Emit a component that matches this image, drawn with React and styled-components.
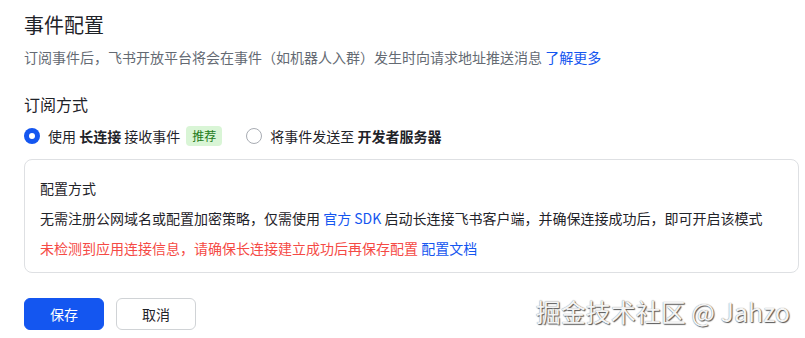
import React, { useState } from "react";
import styled, { createGlobalStyle } from "styled-components";

const GlobalStyle = createGlobalStyle`
  body {
    margin: 0;
    background: #fff;
    font-family: "Noto Sans CJK SC", "Noto Sans", sans-serif;
    color: #1f2329;
  }
`;

function App() {
  const [mode, setMode] = useState("ws");

  return (
    <Page>
      <GlobalStyle />
      <Title>事件配置</Title>
      <Desc>
        订阅事件后，飞书开放平台将会在事件（如机器人入群）发生时向请求地址推送消息{" "}
        <Link>了解更多</Link>
      </Desc>

      <SectionTitle>订阅方式</SectionTitle>
      <RadioGroup>
        <RadioItem onClick={() => setMode("ws")}>
          <Radio checked={mode === "ws"} />
          <span>
            使用 <b>长连接</b> 接收事件
          </span>
          <Tag>推荐</Tag>
        </RadioItem>
        <RadioItem onClick={() => setMode("http")}>
          <Radio checked={mode === "http"} />
          <span>
            将事件发送至 <b>开发者服务器</b>
          </span>
        </RadioItem>
      </RadioGroup>

      <Card>
        <Line>配置方式</Line>
        <Line>
          无需注册公网域名或配置加密策略，仅需使用 <Link>官方 SDK</Link>{" "}
          启动长连接飞书客户端，并确保连接成功后，即可开启该模式
        </Line>
        <Line $error>
          未检测到应用连接信息，请确保长连接建立成功后再保存配置{" "}
          <Link>配置文档</Link>
        </Line>
      </Card>

      <Actions>
        <Button $primary>保存</Button>
        <Button>取消</Button>
      </Actions>

      <Watermark>掘金技术社区 @ Jahzo</Watermark>
    </Page>
  );
}

const Page = styled.div`
  position: relative;
  width: 805px;
  height: 338px;
  box-sizing: border-box;
  padding: 11px 6px 0 24px;
  overflow: hidden;
`;

const Title = styled.div`
  font-size: 20px;
  line-height: 28px;
  color: #1f2329;
`;

const Desc = styled.div`
  margin-top: 7px;
  font-size: 14px;
  line-height: 22px;
  color: #646a73;
  white-space: nowrap;
`;

const Link = styled.a`
  color: #1456f0;
  cursor: pointer;
`;

const SectionTitle = styled.div`
  margin-top: 24px;
  font-size: 16px;
  line-height: 24px;
`;

const RadioGroup = styled.div`
  margin-top: 9px;
  display: flex;
  align-items: center;
  gap: 24px;
  font-size: 14px;
  line-height: 22px;

  b {
    font-weight: 600;
  }
`;

const RadioItem = styled.label`
  display: flex;
  align-items: center;
  gap: 8px;
  cursor: pointer;
`;

const Radio = styled.span`
  position: relative;
  width: 16px;
  height: 16px;
  box-sizing: border-box;
  border-radius: 50%;
  border: ${(p) => (p.checked ? "none" : "1px solid #a8acb3")};
  background: ${(p) => (p.checked ? "#1456f0" : "#fff")};

  &::after {
    content: "";
    display: ${(p) => (p.checked ? "block" : "none")};
    position: absolute;
    left: 5px;
    top: 5px;
    width: 6px;
    height: 6px;
    border-radius: 50%;
    background: #fff;
  }
`;

const Tag = styled.span`
  margin-left: -2px;
  padding: 0 6px;
  height: 20px;
  line-height: 20px;
  font-size: 12px;
  border-radius: 4px;
  background: #d9f5d6;
  color: #237b19;
`;

const Card = styled.div`
  margin-top: 12px;
  border: 1px solid #dee0e3;
  border-radius: 8px;
  padding: 17px 15px 13px;
  display: flex;
  flex-direction: column;
  gap: 8px;
`;

const Line = styled.div`
  font-size: 14px;
  line-height: 22px;
  white-space: nowrap;
  color: ${(p) => (p.$error ? "#f54a45" : "#1f2329")};
`;

const Actions = styled.div`
  margin-top: 25px;
  display: flex;
  gap: 12px;
`;

const Button = styled.button`
  width: 80px;
  height: 32px;
  border-radius: 6px;
  font-family: inherit;
  font-size: 14px;
  cursor: pointer;
  border: 1px solid ${(p) => (p.$primary ? "#1456f0" : "#d0d3d6")};
  background: ${(p) => (p.$primary ? "#1456f0" : "#fff")};
  color: ${(p) => (p.$primary ? "#fff" : "#1f2329")};
`;

const Watermark = styled.div`
  position: absolute;
  right: 15px;
  top: 294px;
  font-size: 25px;
  line-height: 34px;
  color: #f4f4f4;
  text-shadow: 1px 1px 1px #555, 0 0 1px #777;
  pointer-events: none;
`;

export default App;
